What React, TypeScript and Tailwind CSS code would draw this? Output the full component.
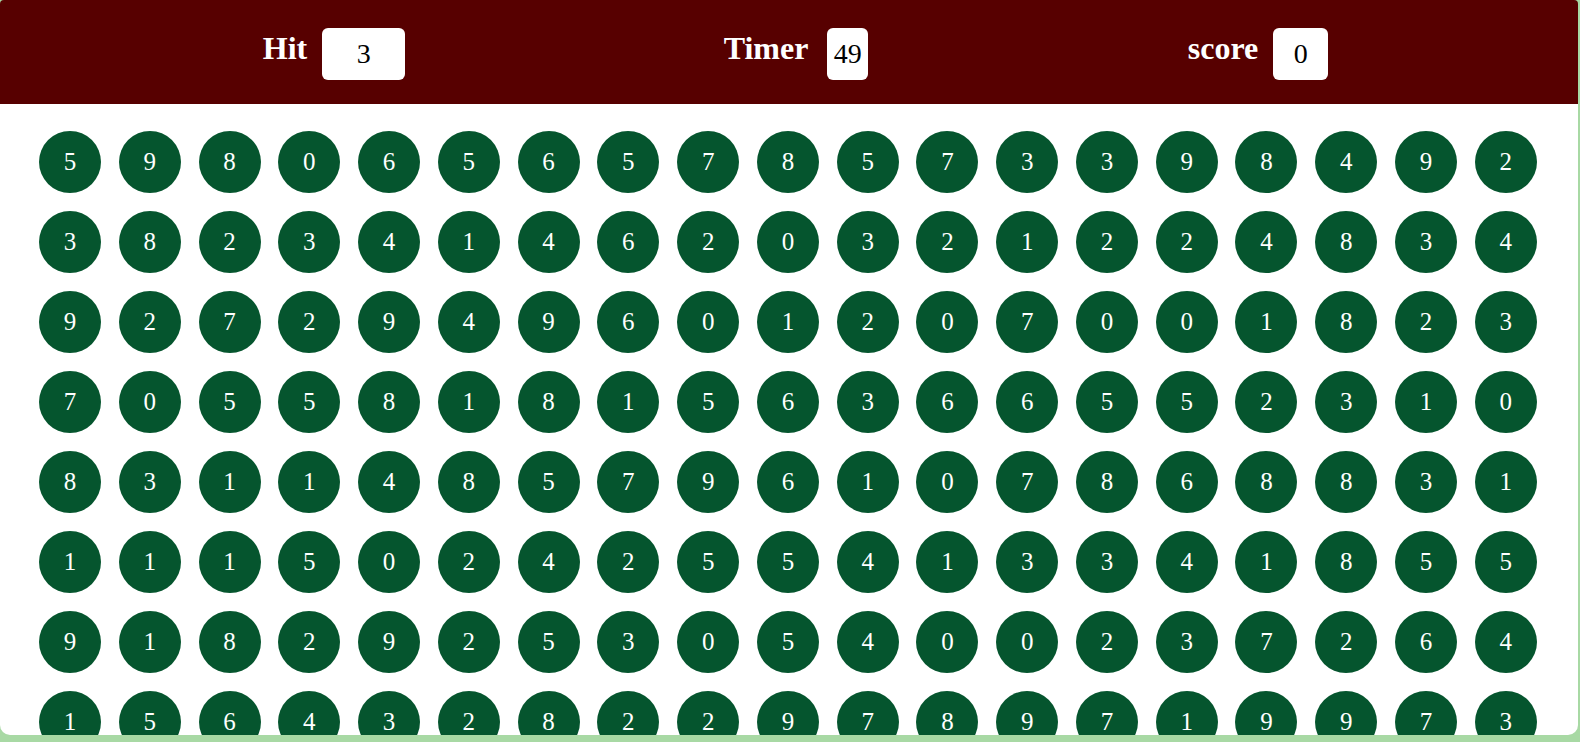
const rows: number[][] = [
    [5, 9, 8, 0, 6, 5, 6, 5, 7, 8, 5, 7, 3, 3, 9, 8, 4, 9, 2],
    [3, 8, 2, 3, 4, 1, 4, 6, 2, 0, 3, 2, 1, 2, 2, 4, 8, 3, 4],
    [9, 2, 7, 2, 9, 4, 9, 6, 0, 1, 2, 0, 7, 0, 0, 1, 8, 2, 3],
    [7, 0, 5, 5, 8, 1, 8, 1, 5, 6, 3, 6, 6, 5, 5, 2, 3, 1, 0],
    [8, 3, 1, 1, 4, 8, 5, 7, 9, 6, 1, 0, 7, 8, 6, 8, 8, 3, 1],
    [1, 1, 1, 5, 0, 2, 4, 2, 5, 5, 4, 1, 3, 3, 4, 1, 8, 5, 5],
    [9, 1, 8, 2, 9, 2, 5, 3, 0, 5, 4, 0, 0, 2, 3, 7, 2, 6, 4],
    [1, 5, 6, 4, 3, 2, 8, 2, 2, 9, 7, 8, 9, 7, 1, 9, 9, 7, 3],
];

type StatProps = { label: string; value: string; boxWidth: string; gap: string };

const Stat = ({ label, value, boxWidth, gap }: StatProps) => (
    <div className={`w-[462px] flex justify-center items-start ${gap}`}>
        <h2 className="text-[32px] font-bold text-white leading-[36px] mt-[2px]">{label}</h2>
        <div className={`${boxWidth} h-[52px] bg-white rounded-[6px] flex items-center justify-center text-[28px] text-black`}>
            {value}
        </div>
    </div>
);

const App = () => {
    return (
        <div className="min-h-screen w-full bg-[#a8d9a4] font-['Liberation_Serif',serif]">
            <div className="w-[1578px] h-[735px] bg-white rounded-[10px] flex flex-col">
                <div className="h-[104px] shrink-0 bg-[#570000] rounded-t-[4px] flex items-start pt-[28px] pl-[103px]">
                    <Stat label="Hit" value="3" boxWidth="w-[83px]" gap="gap-[15px]" />
                    <Stat label="Timer" value="49" boxWidth="w-[41px]" gap="gap-[19px]" />
                    <Stat label="score" value="0" boxWidth="w-[55px]" gap="gap-[15px]" />
                </div>
                <div className="flex-1 overflow-hidden rounded-b-[10px]">
                    <div className="grid grid-cols-[repeat(19,62px)] gap-x-[17.78px] gap-y-[18px] pl-[39px] pt-[27px]">
                        {rows.flat().map((n, i) => (
                            <div
                                key={i}
                                className="w-[62px] h-[62px] rounded-full bg-[#05552e] text-white text-[25px] flex items-center justify-center"
                            >
                                {n}
                            </div>
                        ))}
                    </div>
                </div>
            </div>
        </div>
    );
};

export default App;
